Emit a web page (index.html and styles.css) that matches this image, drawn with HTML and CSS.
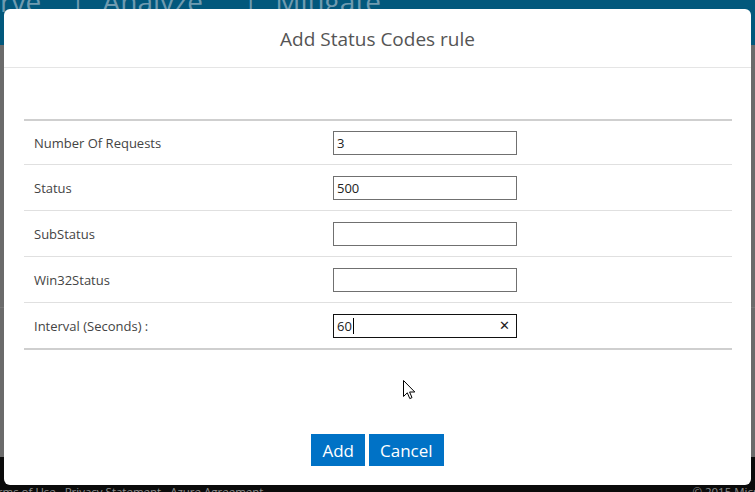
FILE: index.html
```html
<!DOCTYPE html>
<html>
<head>
<meta charset="utf-8">
<link rel="stylesheet" href="styles.css">
</head>
<body>
<div class="page">
  <div class="topbar">
    <span class="nav">Observe</span><span class="sep">|</span><span class="nav">Analyze</span><span class="sep sep-wide">|</span><span class="nav">Mitigate</span>
  </div>
  <div class="content">
    <div class="content-line"></div>
  </div>
  <div class="footer">
    <span class="flinks">Terms of Use&nbsp;&nbsp;&nbsp;Privacy Statement&nbsp;&nbsp;&nbsp;Azure Agreement</span>
    <span class="copy">© 2015 Microsoft</span>
  </div>
</div>

<div class="modal">
  <div class="modal-header">Add Status Codes rule</div>
  <div class="modal-body">
    <div class="grid">
      <div class="row"><div class="label">Number Of Requests</div><div class="field"><div class="input">3</div></div></div>
      <div class="row"><div class="label">Status</div><div class="field"><div class="input">500</div></div></div>
      <div class="row"><div class="label">SubStatus</div><div class="field"><div class="input"></div></div></div>
      <div class="row"><div class="label">Win32Status</div><div class="field"><div class="input"></div></div></div>
      <div class="row"><div class="label">Interval (Seconds) :</div><div class="field"><div class="input focus"><span>60</span><span class="caret"></span><span class="clear">✕</span></div></div></div>
    </div>
  </div>
  <div class="modal-footer">
    <button class="btn">Add</button><button class="btn">Cancel</button>
  </div>
</div>

<svg class="pointer" width="13" height="20" viewBox="0 0 13 20"><path d="M0.5 0.5 L0.5 16.5 L4.3 12.8 L6.8 18.6 L9 17.6 L6.6 12 L11.8 12 Z" fill="#fff" stroke="#000" stroke-width="1" stroke-linejoin="miter"/></svg>
</body>
</html>
```
FILE: styles.css
```css
html, body {
  margin: 0;
  padding: 0;
  height: 100%;
  overflow: hidden;
}
body {
  font-family: "Open Sans", "Noto Sans", sans-serif;
  background: #6b6b6b;
  position: relative;
  width: 755px;
  height: 492px;
}
.page {
  display: flex;
  flex-direction: column;
  height: 492px;
}
.topbar {
  height: 45px;
  background: #02587c;
  display: flex;
  align-items: flex-end;
  overflow: hidden;
  flex: none;
}
.nav, .sep {
  font-size: 28px;
  color: #6f9bb0;
  line-height: 30px;
  margin-bottom: 29px;
}
.nav:first-child { margin-left: -68px; }
.sep { margin: 0 17px 29px 29px; }
.sep-wide { margin-left: 40px; }
.content {
  flex: 1;
  background: #6b6b6b;
  padding-top: 262px;
  box-sizing: border-box;
}
.content-line {
  height: 1px;
  background: #777;
}
.footer {
  height: 35px;
  flex: none;
  background: #0b0b0b;
  display: flex;
  justify-content: space-between;
  align-items: flex-end;
  overflow: hidden;
  font-size: 11.5px;
  color: #8c8c8c;
}
.flinks { margin-left: -15px; margin-bottom: -7px; }
.copy { margin-right: -30px; margin-bottom: -7px; }

.modal {
  position: absolute;
  left: 4px;
  top: 9px;
  width: 747px;
  height: 476px;
  background: #fff;
  border-radius: 6px;
  display: flex;
  flex-direction: column;
}
.modal-header {
  height: 59px;
  border-bottom: 1px solid #e5e5e5;
  display: flex;
  align-items: center;
  justify-content: center;
  font-size: 19px;
  color: #555;
  padding-top: 2px;
  box-sizing: border-box;
}
.modal-body {
  padding: 51px 19px 0 20px;
}
.grid {
  border-top: 2px solid #cfcfcf;
  border-bottom: 2px solid #cfcfcf;
}
.row {
  display: grid;
  grid-template-columns: 309px 1fr;
  height: 45px;
  align-items: center;
  border-top: 1px solid #e0e0e0;
}
.row:first-child { border-top: none; height: 43px; }
.label {
  padding-left: 10px;
  font-size: 13px;
  color: #444;
}
.input {
  width: 184px;
  height: 24px;
  box-sizing: border-box;
  border: 1px solid #707070;
  font-size: 13px;
  color: #222;
  padding-left: 3px;
  display: flex;
  align-items: center;
  line-height: 22px;
}
.input.focus { border-color: #111; position: relative; }
.caret {
  width: 1px;
  height: 16px;
  background: #000;
  margin-left: 1px;
}
.clear {
  margin-left: auto;
  margin-right: 6px;
  font-size: 13px;
  color: #222;
  font-family: "DejaVu Sans", sans-serif;
}
.modal-footer {
  margin-top: auto;
  padding-bottom: 19px;
  display: flex;
  justify-content: center;
  gap: 4px;
}
.btn {
  height: 32px;
  border: none;
  background: #0072c6;
  color: #fff;
  font-family: "Open Sans", "Noto Sans", sans-serif;
  font-size: 17px;
  padding: 0 11px;
  margin: 0;
}
.pointer {
  position: absolute;
  left: 403px;
  top: 380px;
}
```
